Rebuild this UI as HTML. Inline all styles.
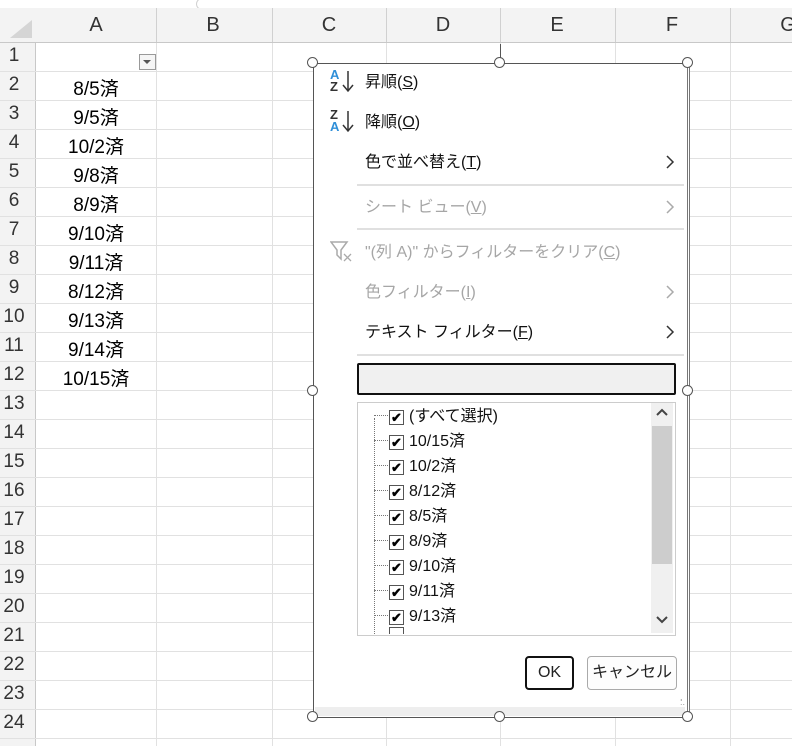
<!DOCTYPE html>
<html><head><meta charset="utf-8"><style>
body{margin:0;width:792px;height:746px;position:relative;overflow:hidden;background:#fff;font-family:"Liberation Sans","Noto Sans CJK JP",sans-serif;}
.a{position:absolute}
.hdr{left:0;top:8px;width:792px;height:34px;background:#f3f3f3;border-bottom:1px solid #c8c8c8}
.rh{left:0;width:35px;background:#f3f3f3;border-right:1px solid #c8c8c8;top:43px;height:703px}
.col{position:absolute;top:14px;font-size:20px;color:#333;width:116px;text-align:center}
.rn{position:absolute;left:0;width:28px;font-size:19px;color:#333;text-align:center}
.cell{position:absolute;left:36px;width:120px;text-align:center;font-size:19px;color:#000}
.hl{position:absolute;left:0;width:792px;height:1px;background:#e1e1e1}
.vl{position:absolute;top:43px;width:1px;height:703px;background:#e1e1e1}
.h{position:absolute;width:9px;height:9px;border:1.5px solid #555;border-radius:50%;background:#fff}
.mi{position:absolute;left:365px;font-size:16px;color:#111}
.dis{color:#a6a6a6}
.sep{position:absolute;left:357px;width:327px;height:2px;background:#e0e0e0}
.arr{position:absolute;left:664px}
.it{position:absolute;left:389px;font-size:16px;color:#111;height:20px}
.cb{display:inline-block;width:13px;height:13px;border:1px solid #555;margin-right:5px;vertical-align:-1px;position:relative;font-size:13px;line-height:13px;text-align:center;font-weight:bold;color:#000}
.dot{position:absolute;left:374px;width:14px;border-top:1px dotted #777}
</style></head><body>
<div class="a" style="left:196px;top:-2px;width:600px;height:10px;border:1px solid #d0d0d0;border-radius:6px;background:#fff"></div>
<div class="a hdr"></div>
<div class="a" style="left:10px;top:20px;width:0;height:0;border-left:22px solid transparent;border-bottom:18px solid #d5d5d5"></div>
<div class="a rh"></div>
<div class="col" style="left:38px">A</div><div class="col" style="left:155px">B</div><div class="col" style="left:271px">C</div><div class="col" style="left:385px">D</div><div class="col" style="left:499px">E</div><div class="col" style="left:614px">F</div><div class="col" style="left:730px">G</div>
<div class="a" style="left:156px;top:8px;width:1px;height:34px;background:#d0d0d0"></div>
<div class="a" style="left:272px;top:8px;width:1px;height:34px;background:#d0d0d0"></div>
<div class="a" style="left:386px;top:8px;width:1px;height:34px;background:#d0d0d0"></div>
<div class="a" style="left:500px;top:8px;width:1px;height:34px;background:#d0d0d0"></div>
<div class="a" style="left:615px;top:8px;width:1px;height:34px;background:#d0d0d0"></div>
<div class="a" style="left:730px;top:8px;width:1px;height:34px;background:#d0d0d0"></div>
<div id="grid"></div>
<script>
var g='';
for(var i=1;i<=24;i++){var t=43+i*29;g+='<div class="hl" style="top:'+(t-1)+'px"></div><div class="rn" style="top:'+(t-27)+'px">'+i+'</div>';}
[156,272,386,500,615,730].forEach(function(x){g+='<div class="vl" style="left:'+x+'px"></div>';});
var v=['8/5済','9/5済','10/2済','9/8済','8/9済','9/10済','9/11済','8/12済','9/13済','9/14済','10/15済'];
v.forEach(function(s,k){g+='<div class="cell" style="top:'+(74+k*29)+'px">'+s+'</div>';});
document.getElementById('grid').innerHTML=g;
</script>
<div class="a" style="left:139px;top:54px;width:15px;height:14px;border:1px solid #999;background:#f5f5f5"></div>
<div class="a" style="left:143px;top:60px;width:0;height:0;border-left:4px solid transparent;border-right:4px solid transparent;border-top:4px solid #555"></div>
<div class="a" style="left:500px;top:44px;width:1px;height:19px;background:#555"></div>
<div class="a" style="left:313px;top:63px;width:373px;height:653px;border:1.5px solid #555;border-right:3px double #777;background:#fff"></div>
<div class="a" style="left:315px;top:707px;width:370px;height:9px;background:#eee"></div>
<div class="a" style="left:680px;top:695px;font-size:9px;color:#999;line-height:5px">.<br>:.</div>
<div class="a" style="left:330px;top:69px;font-size:13px;line-height:12px;font-weight:bold"><span style="color:#2f8fd8">A</span><br><span style="color:#333">Z</span></div>
<svg class="a" style="left:341px;top:70px" width="14" height="24"><path d="M7 1V21M2 15L7 21L12 15" fill="none" stroke="#333" stroke-width="1.5"/></svg>
<div class="a" style="left:330px;top:109px;font-size:13px;line-height:12px;font-weight:bold"><span style="color:#333">Z</span><br><span style="color:#2f8fd8">A</span></div>
<svg class="a" style="left:341px;top:110px" width="14" height="24"><path d="M7 1V21M2 15L7 21L12 15" fill="none" stroke="#333" stroke-width="1.5"/></svg>
<div class="mi" style="top:68px">昇順(<u>S</u>)</div>
<div class="mi" style="top:108px">降順(<u>O</u>)</div>
<div class="mi" style="top:148px">色で並べ替え(<u>T</u>)</div>
<div class="sep" style="top:184px"></div>
<div class="mi dis" style="top:193px">シート ビュー(<u>V</u>)</div>
<div class="sep" style="top:228px"></div>
<svg class="a" style="left:330px;top:240px" width="24" height="24"><path d="M1 2H17L11 10V19L7 15V10Z" fill="none" stroke="#aaa" stroke-width="1.5"/><path d="M14 14L21 21M21 14L14 21" stroke="#aaa" stroke-width="1.3"/></svg>
<div class="mi dis" style="top:238px">"(列 A)" からフィルターをクリア(<u>C</u>)</div>
<div class="mi dis" style="top:278px">色フィルター(<u>I</u>)</div>
<div class="mi" style="top:318px">テキスト フィルター(<u>F</u>)</div>
<svg class="arr" style="top:154px" width="12" height="16"><path d="M3 2L9 8L3 14" fill="none" stroke="#333" stroke-width="1.5"/></svg>
<svg class="arr" style="top:199px" width="12" height="16"><path d="M3 2L9 8L3 14" fill="none" stroke="#aaa" stroke-width="1.5"/></svg>
<svg class="arr" style="top:284px" width="12" height="16"><path d="M3 2L9 8L3 14" fill="none" stroke="#aaa" stroke-width="1.5"/></svg>
<svg class="arr" style="top:324px" width="12" height="16"><path d="M3 2L9 8L3 14" fill="none" stroke="#333" stroke-width="1.5"/></svg>
<div class="sep" style="top:354px"></div>
<div class="a" style="left:357px;top:363px;width:315px;height:28px;border:2.5px solid #111;border-radius:2px;background:#f0f0f0"></div>
<div class="a" style="left:357px;top:402px;width:317px;height:232px;border:1px solid #ccc;background:#fff;overflow:hidden"></div>
<div class="a" style="left:651px;top:403px;width:22px;height:230px;background:#f0f0f0"></div>
<div class="a" style="left:652px;top:426px;width:20px;height:138px;background:#cdcdcd"></div>
<svg class="a" style="left:655px;top:407px" width="14" height="10"><path d="M2 8L7 3L12 8" fill="none" stroke="#444" stroke-width="2"/></svg>
<svg class="a" style="left:655px;top:615px" width="14" height="10"><path d="M2 2L7 7L12 2" fill="none" stroke="#444" stroke-width="2"/></svg>
<div class="a" style="left:374px;top:418px;height:216px;border-left:1px dotted #777"></div>
<div id="lst"></div>
<script>
var l=['(すべて選択)','10/15済','10/2済','8/12済','8/5済','8/9済','9/10済','9/11済','9/13済'];var h='';
l.forEach(function(s,k){var y=402+k*25;h+='<div class="dot" style="top:'+(y+13)+'px"></div><div class="it" style="top:'+y+'px"><span class="cb">✔</span>'+s+'</div>';});
h+='<div class="it" style="top:627px;height:7px;overflow:hidden"><span class="cb"></span></div>';
document.getElementById('lst').innerHTML=h;
</script>
<div class="a" style="left:525px;top:656px;width:45px;height:30px;border:2.5px solid #111;border-radius:4px;font-size:16px;text-align:center;line-height:30px;color:#222">OK</div>
<div class="a" style="left:587px;top:656px;width:88px;height:32px;border:1px solid #aaa;border-radius:4px;font-size:16px;text-align:center;line-height:32px;color:#222;background:#fdfdfd">キャンセル</div>
<div class="h" style="left:307px;top:57px"></div><div class="h" style="left:494px;top:57px"></div><div class="h" style="left:682px;top:57px"></div>
<div class="h" style="left:307px;top:385px"></div><div class="h" style="left:682px;top:385px"></div>
<div class="h" style="left:307px;top:711px"></div><div class="h" style="left:494px;top:711px"></div><div class="h" style="left:682px;top:711px"></div>
</body></html>
